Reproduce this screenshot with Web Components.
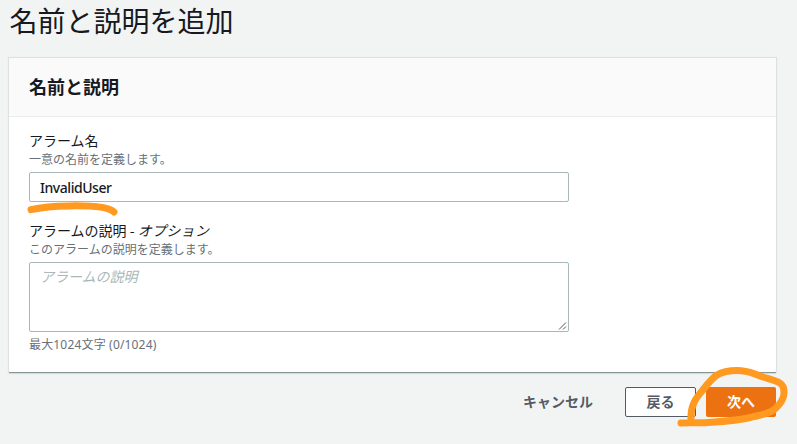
<!DOCTYPE html>
<html lang="ja"><head><meta charset="utf-8"><title>名前と説明を追加</title>
<style>
body{margin:0;background:#f2f4f4;color:#16191f;font:14px/20px "Noto Sans","Noto Sans CJK JP",sans-serif;width:797px;height:444px;overflow:hidden}
</style></head><body>
<alarm-page></alarm-page>
<script>
const define=(name,html)=>customElements.define(name,class extends HTMLElement{
  constructor(){super();this.attachShadow({mode:'open'}).innerHTML=html;}
});
define('page-title',`<style>:host{display:block;height:58px;padding-left:9.5px;box-sizing:border-box;font:400 28px/41px "Noto Sans CJK JP",sans-serif}</style><slot></slot>`);
define('form-card',`<style>
:host{display:block;width:767px;height:314px;margin-left:9px;background:#fff;box-shadow:0 1px 0 #879596,0 0 1px 1px #dde1e1,0 2px 1px #d5dbdb}
header{height:59px;box-sizing:border-box;background:#fafafa;border-bottom:1px solid #eaeded;padding-left:20px;font:700 18px/56px "Noto Sans CJK JP",sans-serif}
main{display:flex;flex-direction:column;gap:14px;padding:14px 20px 0}
</style><header><slot name="heading"></slot></header><main><slot></slot></main>`);
define('form-field',`<style>
:host{display:block;font-family:"Noto Sans CJK JP",sans-serif}
.label{line-height:19px;height:20px}
.hint{font-size:12px;line-height:16px;height:16px;color:#687078;margin-bottom:5px}
.foot{font:12px/16px "Noto Sans","Noto Sans CJK JP",sans-serif;letter-spacing:.17px;color:#687078;margin-top:5px}
</style><div class="label"><slot name="label"></slot></div><div class="hint"><slot name="hint"></slot></div><slot></slot><div class="foot"><slot name="foot"></slot></div>`);
define('text-box',`<style>
:host{display:flex;justify-content:space-between;box-sizing:border-box;width:540px;height:30px;border:1px solid #aab7b8;border-radius:2px;padding:0 10px;font:500 14px/30px "Noto Sans",sans-serif;background:#fff}
span{letter-spacing:-.45px}
:host([multiline]){height:70px;padding:3px 0 0 10px;font:italic 14px/20px "Noto Sans CJK JP",sans-serif;color:#aab7b8}
:host([multiline]) span{letter-spacing:0}
svg{display:none}
:host([multiline]) svg{display:block;align-self:flex-end}
</style><span><slot></slot></span><svg width="10" height="10"><path d="M1 8.5 8 1.5M5 8.5 8 5.5" stroke="#555" fill="none"/></svg>`);
define('action-button',`<style>
:host{display:block;box-sizing:border-box;height:30px;border:1px solid transparent;border-radius:2px;text-align:center;white-space:nowrap;color:#545b64;font:700 14px/26px "Noto Sans CJK JP",sans-serif}
:host([kind=link]){width:70px;margin-right:22px;border-width:1px 0}
:host([kind=normal]){width:71px;background:#fff;border-color:#545b64}
:host([kind=primary]){width:70px;background:#ec7211;color:#fff}
</style><slot></slot>`);
define('action-bar',`<style>:host{display:flex;gap:10px;padding:15px 21px 0 0;justify-content:flex-end}</style><slot></slot>`);
define('marker-strokes',`<style>:host{position:absolute;left:0;top:0;width:797px;height:444px}svg{display:block}</style>
<svg width="797" height="444" fill="none" stroke="#ff991f" stroke-width="7" stroke-linecap="round" stroke-linejoin="round">
<path d="M31 209.7C42 207 55 206 70 205.9C92 205.6 109 207 114 212"/>
<path d="M681 423C690 422.5 697 423 705 422.7C722 421.5 734 421 748 418C762 415 771 413 776 408C782 402 784 398 784 393C784 388 783.5 385 779 382.5C773 379.5 764 378 755 374C748 371.5 745 370.5 737 370.5C728 370.5 722 372 717 375C711 379 706 386 702 391C696 398 690.5 405 691 419"/></svg>`);
define('alarm-page',`<style>:host{display:block;position:relative}i{letter-spacing:.3px}</style>
<page-title>名前と説明を追加</page-title>
<form-card><span slot="heading">名前と説明</span>
<form-field><span slot="label">アラーム名</span><span slot="hint">一意の名前を定義します。</span><text-box>InvalidUser</text-box></form-field>
<form-field><span slot="label">アラームの説明 - <i>オプション</i></span><span slot="hint">このアラームの説明を定義します。</span><text-box multiline>アラームの説明</text-box><span slot="foot">最大1024文字 (0/1024)</span></form-field>
</form-card>
<action-bar><action-button kind="link">キャンセル</action-button><action-button kind="normal">戻る</action-button><action-button kind="primary">次へ</action-button></action-bar>
<marker-strokes></marker-strokes>`);
</script></body></html>
